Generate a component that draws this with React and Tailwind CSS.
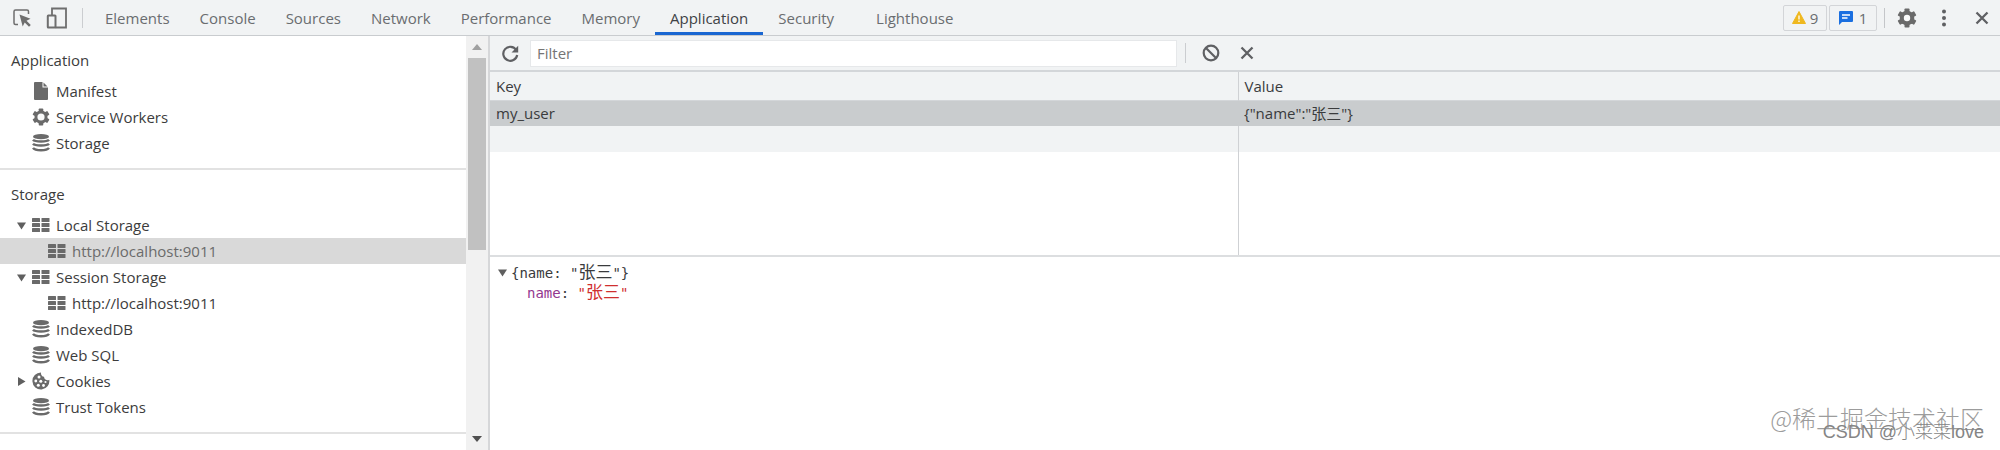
const TABS = ['Elements', 'Console', 'Sources', 'Network', 'Performance', 'Memory', 'Application', 'Security', 'Lighthouse']

function InspectIcon() {
  return (
    <svg width="20" height="20" viewBox="0 0 20 20" fill="none">
      <path d="M6 16.500H3.500a1.500 1.500 0 0 1-1.500-1.500V3.500A1.500 1.500 0 0 1 3.500 2H15a1.500 1.500 0 0 1 1.500 1.500V6" stroke="#6e6e6e" strokeWidth="1.500" />
      <path d="M7.500 6.500l11 4.300-4 2 4.300 4.200-1.800 1.800-4.300-4.300-2 4z" fill="#6e6e6e" />
    </svg>
  )
}

function DeviceIcon() {
  return (
    <svg width="22" height="22" viewBox="0 0 22 22" fill="none" stroke="#6e6e6e" strokeWidth="1.800">
      <path d="M6 8V1.500h14V20.500H9.500" />
      <rect x="1.800" y="8.500" width="7.700" height="12" rx="0.500" strokeWidth="2" />
    </svg>
  )
}

function GearIcon({ size = 18, hole = 4 }) {
  return (
    <svg width={size} height={size} viewBox="0 0 20 20">
      <g fill="#6a6a6a">
        {[0, 60, 120].map((deg) => (
          <rect key={deg} x="7.500" y="0.500" width="5" height="19" rx="0.800" transform={`rotate(${deg} 10 10)`} />
        ))}
      </g>
      <circle cx="10" cy="10" r="7.300" fill="#6a6a6a" />
      <circle cx="10" cy="10" r={hole} fill="#fafbfb" />
    </svg>
  )
}

function FileIcon() {
  return (
    <svg width="18" height="18" viewBox="0 0 18 18">
      <path d="M3 0h7.500v5.500H16V17a1 1 0 0 1-1 1H3a1 1 0 0 1-1-1V1a1 1 0 0 1 1-1z" fill="#6a6a6a" />
      <path d="M11.500 0.500L15.500 4.500H11.500z" fill="#6a6a6a" />
    </svg>
  )
}

function DatabaseIcon() {
  return (
    <svg width="18" height="18" viewBox="0 0 18 18" fill="#6a6a6a">
      <ellipse cx="9" cy="2.700" rx="8" ry="2.600" />
      <g fill="none" stroke="#6a6a6a" strokeWidth="2.500">
        <path d="M1 5.800c2 2.300 14 2.300 16 0" />
        <path d="M1 9.800c2 2.300 14 2.300 16 0" />
        <path d="M1 13.800c2 3.200 14 3.200 16 0" />
      </g>
    </svg>
  )
}

function TableIcon() {
  return (
    <svg width="18" height="18" viewBox="0 0 18 18" fill="#6a6a6a">
      {[2, 7, 12].map((y) => (
        <g key={y}>
          <rect x="0" y={y} width="8" height="4" rx="0.500" />
          <rect x="9.500" y={y} width="8" height="4" rx="0.500" />
        </g>
      ))}
    </svg>
  )
}

function CookieIcon() {
  return (
    <svg width="18" height="18" viewBox="0 0 18 18">
      <path d="M9 0.500a4 4 0 0 0 3 4.300 3.500 3.500 0 0 0 5.300 3A8.500 8.500 0 1 1 9 0.500z" fill="#6a6a6a" />
      <g fill="#fff">
        <circle cx="7" cy="5" r="1.500" />
        <circle cx="3.800" cy="9" r="1.400" />
        <circle cx="8.800" cy="9.300" r="1.500" />
        <circle cx="6.300" cy="13.300" r="1.500" />
        <circle cx="11.500" cy="13.500" r="1.400" />
        <circle cx="13.500" cy="10" r="1.100" />
      </g>
    </svg>
  )
}

function CloseIcon() {
  return (
    <svg width="14" height="14" viewBox="0 0 14 14" stroke="#5f6063" strokeWidth="2.300">
      <path d="M1.500 1.500l11 11M12.500 1.500l-11 11" />
    </svg>
  )
}

function Arrow({ open }) {
  return (
    <svg width="9" height="9" viewBox="0 0 9 9" fill="#5f5f5f">
      {open ? <path d="M0 1.500h9L4.500 8.500z" /> : <path d="M1 0v9l7.500-4.500z" />}
    </svg>
  )
}

const SECTIONS = [
  {
    title: 'Application',
    items: [
      { label: 'Manifest', Icon: FileIcon },
      { label: 'Service Workers', Icon: GearIcon },
      { label: 'Storage', Icon: DatabaseIcon },
    ],
  },
  {
    title: 'Storage',
    items: [
      { label: 'Local Storage', Icon: TableIcon, arrow: 'open' },
      { label: 'http://localhost:9011', Icon: TableIcon, nested: true, selected: true },
      { label: 'Session Storage', Icon: TableIcon, arrow: 'open' },
      { label: 'http://localhost:9011', Icon: TableIcon, nested: true },
      { label: 'IndexedDB', Icon: DatabaseIcon },
      { label: 'Web SQL', Icon: DatabaseIcon },
      { label: 'Cookies', Icon: CookieIcon, arrow: 'closed' },
      { label: 'Trust Tokens', Icon: DatabaseIcon },
    ],
  },
]

function TreeItem({ label, Icon, arrow, nested, selected }) {
  return (
    <li>
      <button
        className={`flex h-[26px] w-full items-center text-left ${nested ? 'pl-8' : 'pl-4'} ${
          selected ? 'bg-[#d9d9d9] text-[#6b6b6b]' : ''
        }`}
      >
        <span className="flex w-4 shrink-0 items-center pl-px">{arrow && <Arrow open={arrow === 'open'} />}</span>
        <span className="mr-1.5 flex w-[18px] shrink-0 justify-center">
          <Icon />
        </span>
        {label}
      </button>
    </li>
  )
}

function Sidebar() {
  return (
    <aside className="flex w-[490px] shrink-0 border-r-2 border-[#d6d7d9]">
      <nav className="flex-1 overflow-hidden bg-white text-[#3c3c3c]">
        {SECTIONS.map((section) => (
          <section key={section.title} className="border-b-2 border-[#e2e2e2] pt-[11px] pb-3">
            <h2 className="mb-[5px] pl-[11px] leading-[26px]">{section.title}</h2>
            <ul>
              {section.items.map((item, i) => (
                <TreeItem key={i} {...item} />
              ))}
            </ul>
          </section>
        ))}
      </nav>
      <div className="flex w-[22px] flex-col items-center bg-[#f1f1f1]">
        <svg className="my-2 h-[6px] w-[10px] shrink-0" viewBox="0 0 10 6" fill="#a0a0a0">
          <path d="M0 6h10L5 0z" />
        </svg>
        <div className="h-48 w-[18px] shrink-0 bg-[#c1c1c1]" />
        <svg className="mt-auto mb-2 h-[6px] w-[10px] shrink-0" viewBox="0 0 10 6" fill="#505050">
          <path d="M0 0h10L5 6z" />
        </svg>
      </div>
    </aside>
  )
}

function TopBar() {
  return (
    <header className="flex h-9 shrink-0 items-center border-b border-[#c9cccf] bg-[#f1f3f4] text-[#6a6d70]">
      <button aria-label="Inspect" className="ml-3">
        <InspectIcon />
      </button>
      <button aria-label="Toggle device toolbar" className="ml-[14px]">
        <DeviceIcon />
      </button>
      <span className="mr-[7px] ml-[14px] h-5 w-px bg-[#cbcdd0]" />
      <nav className="flex h-full">
        {TABS.map((tab) => (
          <button
            key={tab}
            className={`h-[35px] border-b-3 px-[15px] pt-1 leading-[26px] ${
              tab === 'Application' ? 'border-[#1a67d2] text-[#3f4245]' : 'border-transparent'
            } ${tab === 'Lighthouse' ? 'ml-3' : ''}`}
          >
            {tab}
          </button>
        ))}
      </nav>
      <div className="mr-[11px] ml-auto flex items-center">
        <button className="flex h-[26px] w-11 items-center justify-center gap-1 rounded-xs border border-[#d3d5d8]">
          <svg width="14" height="13" viewBox="0 0 14 13">
            <path d="M7 0.500L13.500 12.500H0.500z" fill="#efb81f" stroke="#efb81f" strokeLinejoin="round" />
            <path d="M7 4.500v4M7 9.500v1.500" stroke="#fff" strokeWidth="1.300" />
          </svg>
          9
        </button>
        <button className="ml-0.5 flex h-[26px] w-12 items-center justify-center gap-1.5 rounded-xs border border-[#d3d5d8]">
          <svg width="14" height="14" viewBox="0 0 14 14">
            <path d="M1 0h12a1 1 0 0 1 1 1v9a1 1 0 0 1-1 1H3l-3 3V1a1 1 0 0 1 1-1z" fill="#1a6fe0" />
            <path d="M3 4h8M3 7h5.500" stroke="#fff" strokeWidth="1.400" />
          </svg>
          1
        </button>
        <span className="mr-2 ml-[7px] h-5 w-px bg-[#c4c6c9]" />
        <button aria-label="Settings" className="ml-1">
          <GearIcon size={20} hole={3.200} />
        </button>
        <button aria-label="More" className="ml-6">
          <svg width="6" height="18" viewBox="0 0 6 18" fill="#5f6063">
            <circle cx="3" cy="2.500" r="2" />
            <circle cx="3" cy="9" r="2" />
            <circle cx="3" cy="15.500" r="2" />
          </svg>
        </button>
        <button aria-label="Close" className="ml-7">
          <CloseIcon />
        </button>
      </div>
    </header>
  )
}

function FilterBar() {
  return (
    <div className="flex h-9 shrink-0 items-center border-b-2 border-[#d3d6d9] bg-[#f1f3f4]">
      <button aria-label="Refresh" className="ml-3">
        <svg width="17" height="17" viewBox="0 0 17 17">
          <path d="M14.200 5A7 7 0 1 0 15.200 10" fill="none" stroke="#5f6063" strokeWidth="2.200" />
          <path d="M16.200 0.800v6.700H9.500z" fill="#5f6063" />
        </svg>
      </button>
      <input
        aria-label="Filter"
        placeholder="Filter"
        className="ml-[11px] h-[27px] w-3/7 border border-[#e6e8ea] bg-white px-1.5 outline-none placeholder:text-[#757575]"
      />
      <span className="ml-2 h-5 w-px bg-[#cbcdd0]" />
      <button aria-label="Clear all" className="ml-4">
        <svg width="18" height="18" viewBox="0 0 18 18" fill="none" stroke="#5f6063" strokeWidth="2.200">
          <circle cx="9" cy="9" r="7.300" />
          <path d="M4 4l10 10" />
        </svg>
      </button>
      <button aria-label="Delete selected" className="ml-5">
        <CloseIcon />
      </button>
    </div>
  )
}

function StorageTable() {
  return (
    <div className="h-[185px] shrink-0 border-b-2 border-[#dcdee0] bg-white">
      <table className="h-full w-full table-fixed border-collapse text-left text-[#3a3b3d]">
        <colgroup>
          <col />
          <col />
          <col className="w-[14px]" />
        </colgroup>
        <thead>
          <tr className="h-7 border-b border-[#d3d6d9] bg-[#f1f3f4]">
            <th className="border-r border-[#cfd1d4] px-1.5 py-0 font-normal">Key</th>
            <th className="px-1.5 py-0 font-normal">Value</th>
            <th />
          </tr>
        </thead>
        <tbody>
          <tr className="h-[26px] bg-[#c9ccce]">
            <td className="px-1.5 py-0">my_user</td>
            <td className="px-1.5 py-0">{'{"name":"张三"}'}</td>
            <td />
          </tr>
          <tr className="h-[26px] bg-[#f1f3f4]">
            <td className="border-r border-[#cfd1d4]" />
            <td />
            <td />
          </tr>
          <tr>
            <td className="border-r border-[#cfd1d4]" />
            <td />
            <td />
          </tr>
        </tbody>
      </table>
    </div>
  )
}

function Preview() {
  return (
    <div className="flex-1 bg-white pt-[5px] pl-2 font-['DejaVu_Sans_Mono','Noto_Sans_CJK_SC',monospace] text-sm leading-5 text-[#3a3b3d]">
      <div className="flex h-5 items-center">
        <span className="mr-1">
          <Arrow open />
        </span>
        <span className="whitespace-pre">
          {'{name: "'}
          <span className="text-[17px] leading-5">张三</span>
          {'"}'}
        </span>
      </div>
      <div className="h-5 pl-[29px] whitespace-pre">
        <span className="text-[#93378f]">name</span>:{' '}
        <span className="text-[#cf2f2f]">
          "<span className="text-[17px] leading-5">张三</span>"
        </span>
      </div>
    </div>
  )
}

export default function App() {
  return (
    <div className="relative flex h-screen flex-col overflow-hidden bg-white font-['Open_Sans','Noto_Sans_CJK_SC',sans-serif] text-[15px] leading-5">
      <TopBar />
      <div className="flex min-h-0 flex-1">
        <Sidebar />
        <main className="flex min-w-0 flex-1 flex-col">
          <FilterBar />
          <StorageTable />
          <Preview />
        </main>
      </div>
      <p className="pointer-events-none absolute right-4 bottom-4 font-['Noto_Sans_CJK_SC',sans-serif] text-2xl leading-8 font-light text-[#9c9c9c]">
        @稀土掘金技术社区
      </p>
      <p className="pointer-events-none absolute right-4 bottom-1.5 font-['Liberation_Sans','Noto_Sans_CJK_SC',sans-serif] text-lg leading-6 font-light text-[#858585]">
        CSDN @小菜菜love
      </p>
    </div>
  )
}
